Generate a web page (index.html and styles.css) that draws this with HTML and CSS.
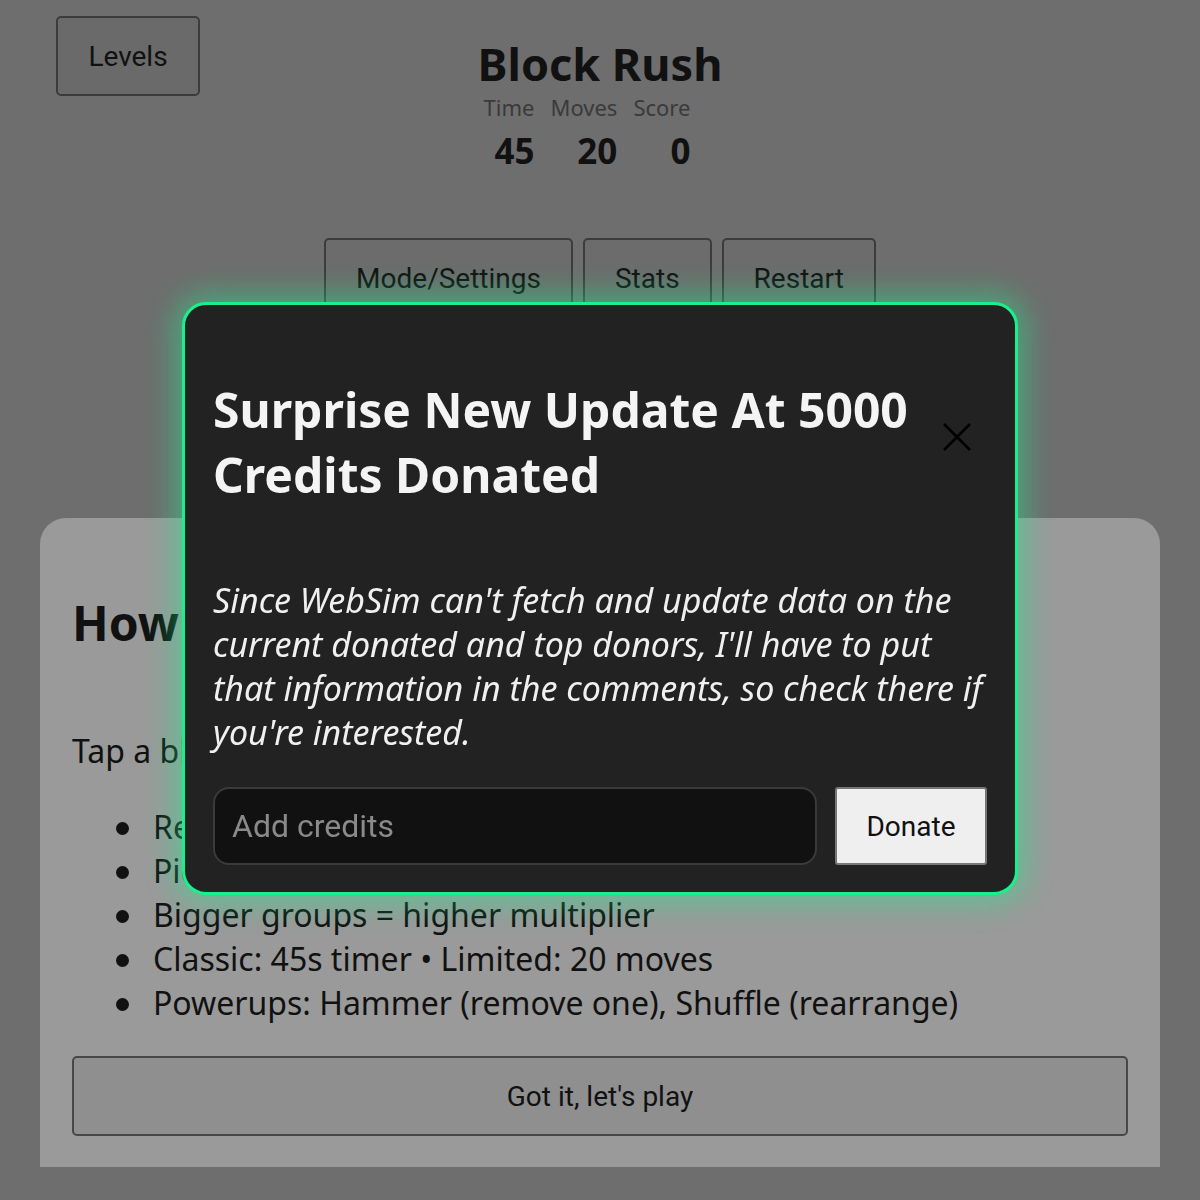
FILE: index.html
```html
<!DOCTYPE html>
<html lang="en">
<head>
  <meta charset="UTF-8" />
  <title>Block Rush</title>
  <meta name="viewport" content="width=device-width, initial-scale=1.0">
  <link rel="stylesheet" href="styles.css">
</head>
<body>

  <header class="top-bar">
    <button class="btn levels-btn">Levels</button>
    <div class="title-block">
      <h1 class="game-title">Block Rush</h1>
      <div class="stats">
        <div class="stat"><span class="stat-label">Time</span><span class="stat-value">45</span></div>
        <div class="stat"><span class="stat-label">Moves</span><span class="stat-value">20</span></div>
        <div class="stat"><span class="stat-label">Score</span><span class="stat-value">0</span></div>
      </div>
    </div>
    <div></div>
  </header>

  <div class="controls">
    <button class="btn ctrl-btn">Mode/Settings</button>
    <button class="btn ctrl-btn">Stats</button>
    <button class="btn ctrl-btn">Restart</button>
  </div>

  <section class="howto">
    <h2 class="howto-title">How to play</h2>
    <p class="howto-text">Tap a block group of 2+ touching tiles of one color.</p>
    <ul class="howto-list">
      <li>Remove groups to earn points</li>
      <li>Pick a mode to change the rules</li>
      <li>Bigger groups = higher multiplier</li>
      <li>Classic: 45s timer • Limited: 20 moves</li>
      <li>Powerups: Hammer (remove one), Shuffle (rearrange)</li>
    </ul>
    <button class="btn play-btn">Got it, let's play</button>
  </section>

  <div class="overlay">
    <div class="modal">
      <div class="modal-head">
        <h2 class="modal-title">Surprise New Update At 5000 Credits Donated</h2>
        <button class="close-btn" aria-label="Close">
          <svg width="30" height="30" viewBox="0 0 30 30"><path d="M2 2 L28 28 M28 2 L2 28" stroke="#000" stroke-width="2.6" fill="none"/></svg>
        </button>
      </div>
      <p class="modal-text">Since WebSim can't fetch and update data on the current donated and top donors, I'll have to put that information in the comments, so check there if you're interested.</p>
      <div class="donate-row">
        <input type="number" class="credits-input" placeholder="Add credits">
        <button class="donate-btn">Donate</button>
      </div>
    </div>
  </div>

</body>
</html>
```

FILE: styles.css
```css
* { margin: 0; padding: 0; box-sizing: border-box; }

html, body {
  width: 1200px; height: 1200px;
  overflow: hidden;
}

body {
  background: #6e6e6e;
  font-family: 'Noto Sans', 'Open Sans', sans-serif;
  color: #111;
}

.btn {
  font-family: Roboto, sans-serif;
  font-size: 28px;
  color: #111;
  background: #6a6a6a;
  border: 2px solid #3c3c3c;
  border-radius: 5px;
  cursor: pointer;
}

/* top area */
.top-bar {
  display: grid;
  grid-template-columns: 1fr auto 1fr;
  padding-top: 16px;
}

.levels-btn {
  justify-self: start;
  margin-left: 56px;
  width: 144px; height: 80px;
}

.title-block { display: flex; flex-direction: column; align-items: center; }

.game-title {
  font-size: 45px; font-weight: 700;
  line-height: 60px;
  margin-top: 18px;
  color: #111;
}

.stats { display: flex; gap: 16px; margin-top: -2px; align-self: flex-start; margin-left: 6px; }

.stat { display: flex; flex-direction: column; align-items: flex-end; }

.stat-label { font-size: 22px; color: #3a3a3a; line-height: 30px; }

.stat-value { font-size: 35px; font-weight: 700; line-height: 58px; }

.controls {
  display: flex; justify-content: center; gap: 10px;
  margin-top: 58px;
}

.ctrl-btn { height: 80px; padding: 0 30px; background: #6c6c6c; }

/* how to play card */
.howto {
  margin: 200px 40px 0;
  background: #9a9a9a;
  border-radius: 26px 26px 0 0;
  padding: 73px 32px 31px;
}

.howto-title { font-size: 48px; font-weight: 700; line-height: 64px; }

.howto-text { font-size: 32px; margin-top: 74px; line-height: 44px; }

.howto-list {
  list-style: none;
  margin-top: 32px;
  padding-left: 44px;
  font-size: 32px; line-height: 44px;
}

.howto-list li { display: flex; align-items: center; gap: 24px; }

.howto-list li::before {
  content: '';
  width: 13px; height: 13px; flex: none;
  border-radius: 50%;
  background: #111;
  margin-top: 3px;
}

.play-btn {
  display: block; width: 100%; height: 80px;
  margin-top: 31px;
  background: #8f8f8f;
  border-color: #474747;
}

/* donation modal */
.overlay {
  position: fixed; inset: 0;
  display: flex; align-items: center; justify-content: center;
}

.modal {
  width: 836px;
  background: #222;
  border: 3px solid #18f08c;
  border-radius: 24px;
  box-shadow: 0 0 30px 8px rgba(24, 240, 140, 0.45);
  padding: 72px 28px 27px;
  margin-top: -3px;
}

.modal-head { display: flex; align-items: center; gap: 16px; }

.modal-title {
  color: #f4f4f4; font-size: 48px; font-weight: 700;
  line-height: 65px;
  flex: 1;
}

.close-btn {
  background: none; border: none;
  width: 44px; height: 44px;
  display: flex; align-items: center; justify-content: center;
  margin: 0 8px 10px 0;
}

.modal-text {
  color: #f0f0f0; font-style: italic;
  font-size: 34px; line-height: 44px;
  margin-top: 71px;
}

.donate-row { display: flex; gap: 18px; margin-top: 33px; }

.credits-input {
  flex: 1; height: 78px;
  background: #111;
  border: 2px solid #3a3a3a;
  border-radius: 16px;
  padding: 0 17px;
  font-family: Roboto, sans-serif; font-size: 32px;
  color: #eee; outline: none;
}

.credits-input::placeholder { color: #8a8a8a; }

.donate-btn {
  width: 152px; height: 78px;
  background: #efefef;
  border: 2px solid #777;
  border-radius: 3px;
  font-family: Roboto, sans-serif; font-size: 28px; color: #111;
}
```
